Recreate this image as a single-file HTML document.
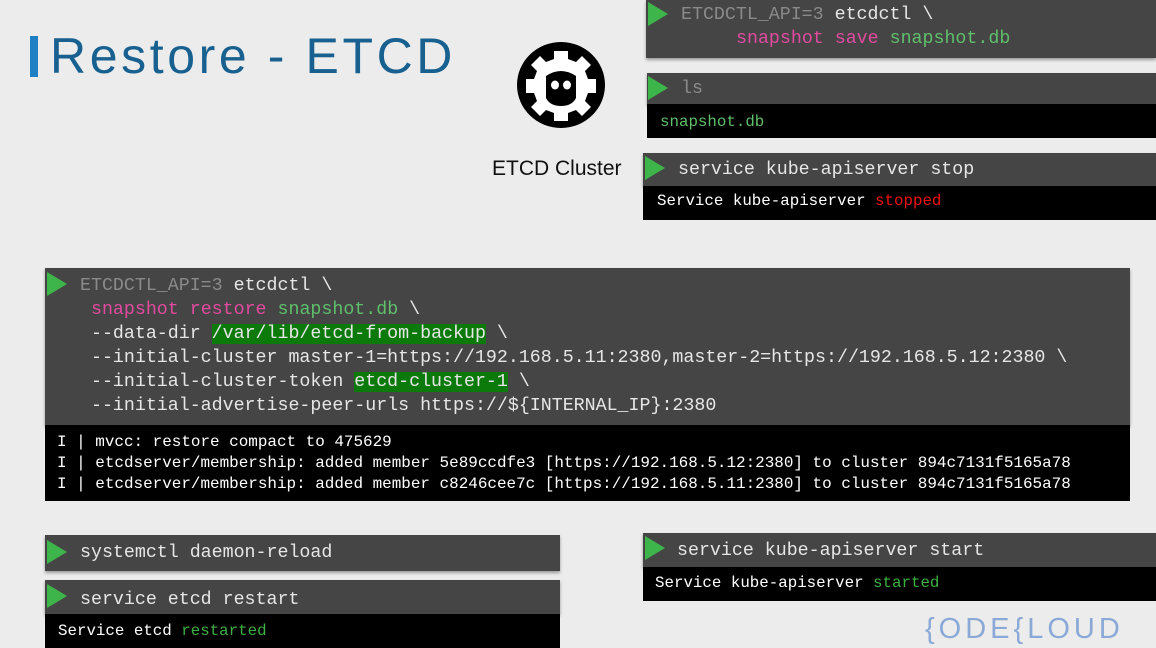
<!DOCTYPE html>
<html><head><meta charset="utf-8"><style>
body{margin:0;width:1156px;height:648px;background:#ececec;position:relative;overflow:hidden;font-family:"Liberation Mono","DejaVu Sans Mono",monospace;}
.b{position:absolute;background:#454545;box-shadow:0 2px 3px rgba(0,0,0,.35);}
.o{position:absolute;background:#000;color:#fff;}
.t{position:absolute;font-size:18.3px;white-space:pre;color:#e6e6e6;}
.tri{position:absolute;width:0;height:0;border-top:12px solid transparent;border-bottom:12px solid transparent;border-left:20px solid #3db54a;}
.g{color:#5fbf6a}.p{color:#e24aa0}.gr{color:#8a8a8a}.r{color:#f01010}
.hl{background:#0b7a0b;color:#e6e6e6}
.s{position:absolute;font-size:15.8px;white-space:pre;color:#fff;}
</style></head><body>
<div style="position:absolute;left:30px;top:36px;width:8px;height:41px;background:#1f80c4"></div>
<div style="position:absolute;left:50px;top:27px;font-family:'Liberation Sans',sans-serif;font-size:50px;color:#17608f;letter-spacing:3.6px;">Restore - ETCD</div>
<svg style="position:absolute;left:516px;top:40px" width="90" height="90" viewBox="0 0 90 90">
<ellipse cx="45" cy="45" rx="44" ry="43" fill="#000"/>
<path d="M38 11h14v8l8 3 6-6 9 9-6 6 3 8h8v14h-8l-3 8 6 6-9 9-6-6-8 3v8H38v-8l-8-3-6 6-9-9 6-6-3-8h-8V39h8l3-8-6-6 9-9 6 6 8-3z" fill="#fff"/>
<path d="M30 36q15-10 30 0v22q-4 8-15 8t-15-8z" fill="#000"/>
<ellipse cx="39" cy="45" rx="4" ry="4.5" fill="#fff"/><ellipse cx="51" cy="45" rx="4" ry="4.5" fill="#fff"/>
</svg>
<div style="position:absolute;left:492px;top:157px;font-family:'Liberation Sans',sans-serif;font-size:21px;color:#111;">ETCD Cluster</div>

<div class="b" style="left:646px;top:0;width:510px;height:58px"></div>
<div class="tri" style="left:648px;top:2px"></div>
<div class="t" style="left:681px;top:5px"><span class="gr">ETCDCTL_API=3</span> etcdctl \</div>
<div class="t" style="left:736px;top:29px"><span class="p">snapshot save</span> <span class="g">snapshot.db</span></div>

<div class="b" style="left:647px;top:73px;width:509px;height:31px"></div>
<div class="tri" style="left:648px;top:76px"></div>
<div class="t" style="left:681px;top:79px"><span class="gr">ls</span></div>
<div class="o" style="left:647px;top:104px;width:509px;height:34px"></div>
<div class="s" style="left:660px;top:113px"><span class="g">snapshot.db</span></div>

<div class="b" style="left:643px;top:153px;width:513px;height:33px"></div>
<div class="tri" style="left:645px;top:156px"></div>
<div class="t" style="left:678px;top:160px">service kube-apiserver stop</div>
<div class="o" style="left:643px;top:186px;width:513px;height:34px"></div>
<div class="s" style="left:657px;top:192px">Service kube-apiserver <span class="r">stopped</span></div>

<div class="b" style="left:45px;top:268px;width:1085px;height:157px"></div>
<div class="tri" style="left:47px;top:272px"></div>
<div class="t" style="left:80px;top:274px;line-height:24px"><span class="gr">ETCDCTL_API=3</span> etcdctl \
 <span class="p">snapshot restore</span> <span class="g">snapshot.db</span> \
 --data-dir <span class="hl">/var/lib/etcd-from-backup</span> \
 --initial-cluster master-1=https://192.168.5.11:2380,master-2=https://192.168.5.12:2380 \
 --initial-cluster-token <span class="hl">etcd-cluster-1</span> \
 --initial-advertise-peer-urls https://${INTERNAL_IP}:2380</div>
<div class="o" style="left:45px;top:425px;width:1085px;height:76px"></div>
<div class="s" style="left:57px;top:432px;line-height:21px;font-size:15.95px">I | mvcc: restore compact to 475629
I | etcdserver/membership: added member 5e89ccdfe3 [https://192.168.5.12:2380] to cluster 894c7131f5165a78
I | etcdserver/membership: added member c8246cee7c [https://192.168.5.11:2380] to cluster 894c7131f5165a78</div>

<div class="b" style="left:45px;top:535px;width:515px;height:36px"></div>
<div class="tri" style="left:47px;top:540px"></div>
<div class="t" style="left:80px;top:543px">systemctl daemon-reload</div>

<div class="b" style="left:45px;top:580px;width:515px;height:34px"></div>
<div class="tri" style="left:47px;top:584px"></div>
<div class="t" style="left:80px;top:590px">service etcd restart</div>
<div class="o" style="left:45px;top:614px;width:515px;height:34px"></div>
<div class="s" style="left:58px;top:622px">Service etcd <span style="color:#3cb043">restarted</span></div>

<div class="b" style="left:643px;top:533px;width:513px;height:34px"></div>
<div class="tri" style="left:645px;top:536px"></div>
<div class="t" style="left:677px;top:541px">service kube-apiserver start</div>
<div class="o" style="left:643px;top:567px;width:513px;height:34px"></div>
<div class="s" style="left:655px;top:574px">Service kube-apiserver <span style="color:#3cb043">started</span></div>

<div style="position:absolute;left:925px;top:613px;font-family:'Liberation Sans',sans-serif;font-size:29px;color:#8aa9d6;letter-spacing:4px">{ODE{LOUD</div>
</body></html>
